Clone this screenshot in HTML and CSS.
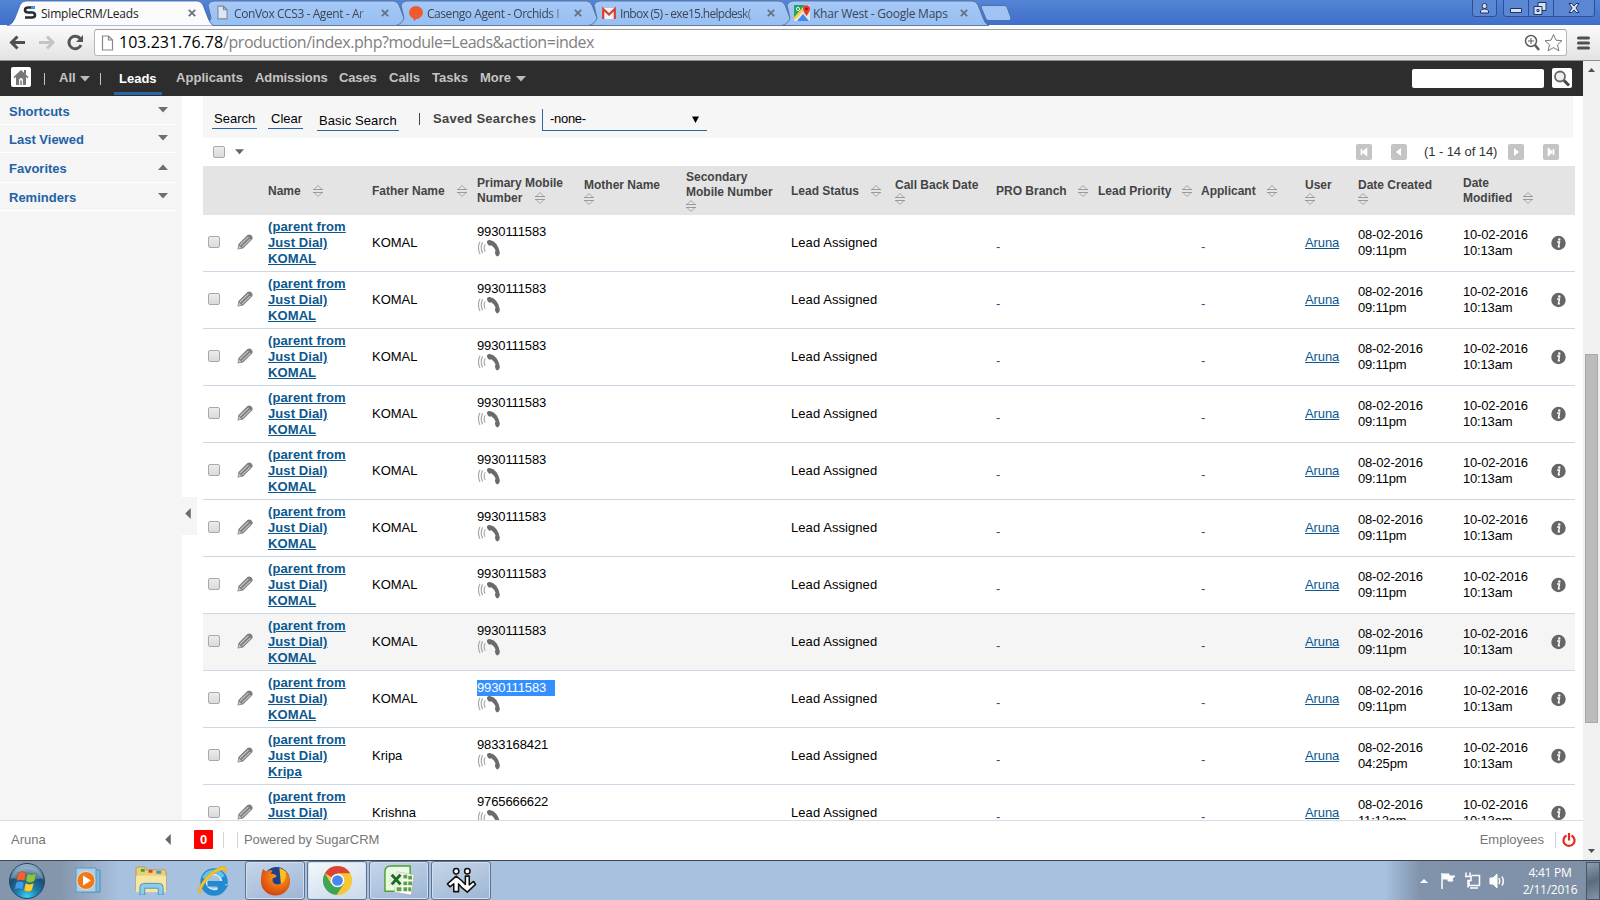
FILE: index.html
```html
<!DOCTYPE html>
<html lang="en">
<head>
<meta charset="utf-8">
<title>SimpleCRM/Leads</title>
<link rel="stylesheet" href="styles.css">
</head>
<body>
<svg class="defs" width="0" height="0">
  <defs>
    <linearGradient id="gTab" x1="0" y1="0" x2="0" y2="1"><stop offset="0" stop-color="#a5c9f7"/><stop offset="1" stop-color="#98bff2"/></linearGradient>
    <radialGradient id="gStart" cx=".5" cy=".95" r=".9"><stop offset="0" stop-color="#3fd0f5"/><stop offset=".35" stop-color="#1a7fae"/><stop offset=".7" stop-color="#1d4d75"/><stop offset="1" stop-color="#8fb2cc"/></radialGradient>
    <linearGradient id="gIe" x1="0" y1="0" x2="0" y2="1"><stop offset="0" stop-color="#6fd0f7"/><stop offset="1" stop-color="#1583d0"/></linearGradient>
    <radialGradient id="gFox" cx=".6" cy=".3" r=".8"><stop offset="0" stop-color="#f9b01c"/><stop offset=".5" stop-color="#ea6a13"/><stop offset="1" stop-color="#c93a0d"/></radialGradient>
  </defs>
  <symbol id="sort" viewBox="0 0 10 12"><path d="M1 4.500 5 .6 9 4.500M1 7.500 5 11.400 9 7.500" fill="#e8e8e8" stroke="#a4a4a4"/><path d="M0 4.500h10M0 7.500h10" stroke="#999"/></symbol>
  <symbol id="pencil" viewBox="0 0 16 16"><path d="M.5 15.500 1.500 10 10.500 1Q12.500-.3 14.300 1.300L15 2.200Q16.300 4 15 5.600L6 14.500Z" fill="#7c7c7c"/><path d="M3 11 11.500 2.800M5.200 12.800 13.500 4.800" stroke="#c8c8c8" stroke-width="1.100"/><path d="M1.200 14.800 2 11.500 4.700 14Z" fill="#c9c9c9"/></symbol>
  <symbol id="phone" viewBox="0 0 24 18"><path d="M9.800 1.500Q10.500 0 13 0 17.500.8 20 4.500 22.800 8.500 23.500 13.500 23.500 16 21 17.500 20 17.500 19 16L18.200 13 19 11.500Q17.500 7.500 14.500 5.500L13 6Q10 5 9.800 1.500Z" fill="#6b6b6b"/><path d="M8.200 4.500Q5.500 8 8 12.500M5.300 2.500Q2.200 8 5.300 14M2.500 1.800Q-.8 8 2.500 14.800" fill="none" stroke="#a5a5a5" stroke-width="1.200"/></symbol>
  <symbol id="info" viewBox="0 0 16 16"><circle cx="8" cy="8" r="7.700" fill="#666"/><circle cx="8.800" cy="4.200" r="1.300" fill="#fff"/><path d="M6.500 7H9L8 12H9.500" fill="none" stroke="#fff" stroke-width="1.600"/></symbol>
  <symbol id="x" viewBox="0 0 8 8"><path d="M.8.800 7.200 7.200M7.200.800.800 7.200" stroke="#667183" stroke-width="1.800"/></symbol>
  <symbol id="page" viewBox="0 0 12 16"><path d="M1 1h6l4 4v10H1zM7 1v4h4" fill="#fff" fill-opacity=".6" stroke="#888" stroke-width="1.200"/></symbol>
  <symbol id="down" viewBox="0 0 10 6"><path d="M0 0h10L5 5.500z" fill="currentColor"/></symbol>
</svg>

<header class="tabstrip">
  <div class="tab active"><svg class="tabbg" viewBox="0 0 207 26"><path d="M0 26Q6 24 8 18L13 5Q15 1 19 1H190Q194 1 196 5L201 18Q203 24 207 26Z" fill="#fbfbfb" stroke="#3b64ad" stroke-width=".8"/></svg>
    <svg class="fav" viewBox="0 0 14 16"><path d="M12 2.500H5.500Q2 2.500 2 5T5.500 7.500H9Q12 7.500 12 10T9 12.500H2" fill="none" stroke="#222b36" stroke-width="2.600"/><path d="M8 1.200h4v2.600H8z" fill="#3d9be9"/></svg>
    <span class="t t1">SimpleCRM/Leads</span><svg class="close"><use href="#x"/></svg></div>
  <div class="tab"><svg class="tabbg" viewBox="0 0 207 26"><path d="M0 25.500Q6 24 8 18L5 5Q7 1 11 1H190Q194 1 196 5L201 18Q203 24 207 25.500Z" fill="url(#gTab)" stroke="#52719f" stroke-width=".9"/></svg>
    <svg class="fav" viewBox="-1 0 14 16"><use href="#page" width="11" height="15"/></svg>
    <span class="t t2 fade">ConVox CCS3 - Agent - Ar</span><svg class="close"><use href="#x"/></svg></div>
  <div class="tab"><svg class="tabbg" viewBox="0 0 207 26"><path d="M0 25.500Q6 24 8 18L5 5Q7 1 11 1H190Q194 1 196 5L201 18Q203 24 207 25.500Z" fill="url(#gTab)" stroke="#52719f" stroke-width=".9"/></svg>
    <svg class="fav" viewBox="0 0 14 16"><ellipse cx="7" cy="7.500" rx="7" ry="6.500" fill="#ee5a30"/><path d="M4 12 5 16 10 12z" fill="#ee5a30"/></svg>
    <span class="t t3 fade">Casengo Agent - Orchids I</span><svg class="close"><use href="#x"/></svg></div>
  <div class="tab"><svg class="tabbg" viewBox="0 0 207 26"><path d="M0 25.500Q6 24 8 18L5 5Q7 1 11 1H190Q194 1 196 5L201 18Q203 24 207 25.500Z" fill="url(#gTab)" stroke="#52719f" stroke-width=".9"/></svg>
    <svg class="fav" viewBox="0 0 14 16"><path d="M0 3h14v11H0z" fill="#f3f3f3"/><path d="M1.200 14V4L7 9.500 12.800 4V14" fill="none" stroke="#d93b30" stroke-width="2.200"/></svg>
    <span class="t t4 fade">Inbox (5) - exe15.helpdesk(</span><svg class="close"><use href="#x"/></svg></div>
  <div class="tab"><svg class="tabbg" viewBox="0 0 207 26"><path d="M0 25.500Q6 24 8 18L5 5Q7 1 11 1H190Q194 1 196 5L201 18Q203 24 207 25.500Z" fill="url(#gTab)" stroke="#52719f" stroke-width=".9"/></svg>
    <svg class="fav maps" viewBox="0 0 16 16"><path d="M0 0h16v16H0z" fill="#e9e5dc"/><path d="M0 0h11L0 13z" fill="#1fa463"/><path d="M3 16 9 9 15 16z" fill="#4285f4"/><path d="M0 14 10 3" stroke="#fc3" stroke-width="2.500"/><path d="M12.500 11Q9 6 9 3.800A3.500 3.500 0 0 1 16 3.800Q16 6 12.500 11z" fill="#e33b2e"/><circle cx="12.500" cy="4" r="1.300" fill="#7a1a12"/><circle cx="4" cy="4" r="1.600" fill="none" stroke="#fff" stroke-width=".9"/></svg>
    <span class="t t5">Khar West - Google Maps</span><svg class="close"><use href="#x"/></svg></div>
  <svg class="newtab" viewBox="0 0 32 16"><path d="M1 2Q1 .5 3 .5H24Q26 .5 27 2L31 13Q31 15.500 29 15.500H9Q7 15.500 6 14Z" fill="#9fc4f4" stroke="#4b6fae"/></svg>
  <svg class="winbtns" width="126" height="20" viewBox="0 0 126 20"><g fill="#5a86d4" stroke="#2e4f93"><path d="M1.500-2V14Q1.500 16.500 4 16.500H23Q25.500 16.500 25.500 14V-2z"/><path d="M32.500-2V14Q32.500 16.500 35 16.500H121Q123.500 16.500 123.500 14V-2z"/><path d="M57.500 0V16M82.500 0V16"/></g><g fill="#d4e2f7" stroke="#22355f"><circle cx="13.500" cy="6" r="2.500"/><path d="M9.500 13V11Q10 9 13.500 9T17.500 11V13z"/><path d="M39.500 8.500h11v4h-11z"/><path d="M67 2.500h8v8h-8z"/><path d="M63 6.500h8v8h-8zM66 9.500h2v2h-2z"/><path d="M98 3.500h3l2 2.500 2-2.500h3L105 8l3 4.500h-3L103 10l-2 2.500h-3l3-4.500z"/></g></svg>
</header>

<div class="toolbar">
  <svg class="navicons" width="94" height="36" viewBox="0 0 94 36"><g fill="none" stroke-width="3"><path d="M25 17.500H12M17.500 11.500l-6 6 6 6" stroke="#4f4f4f"/><path d="M39 17.500H52M47 11.500l6 6-6 6" stroke="#c4c4c4"/><path d="M80.500 14A6.300 6.300 0 1 0 81 20" stroke="#555"/></g><path d="M83 10v7h-7z" fill="#555"/></svg>
  <div class="omnibox"><svg class="pg"><use href="#page"/></svg><span class="url"><b>103.231.76.78</b>/production/index.php?module=Leads&amp;action=index</span>
    <svg class="omniicons" width="42" height="22" viewBox="0 0 42 22"><g fill="none" stroke="#5c5c5c"><circle cx="8" cy="9" r="5.500" stroke-width="1.500"/><path d="M5 9h6M8 6v6"/><path d="M12 13l4 5" stroke-width="2.500"/><path d="M30.500 2.500l2.500 5.700 6 .5-4.500 4.100 1.400 6-5.400-3.200-5.400 3.200 1.400-6-4.500-4.100 6-.5z" stroke="#777"/></g></svg></div>
  <svg class="burger" width="13" height="14" viewBox="0 0 13 14"><path d="M1.500 2h10M1.500 7h10M1.500 12h10" stroke="#505050" stroke-width="3" stroke-linecap="round"/></svg>
</div>

<div class="view">
  <div class="page">
    <nav class="nav">
      <svg class="home" viewBox="0 0 20 20"><rect width="20" height="20" rx="2" fill="#fff"/><path d="M2.500 10 10 3l7.500 7-1 1.200L15 10v8H5v-8l-1.500 1.200zM13 3h2v4h-2z" fill="#777"/><path d="M8 18v-5a2 2 0 0 1 4 0v5z" fill="#eee"/><path d="M9.300 18v-4.500h1.400V18z" fill="#777"/></svg>
      <span class="bar b1"></span><span class="n n-all">All</span><svg class="caret"><use href="#down"/></svg><span class="bar b2"></span>
      <span class="n on n-leads">Leads</span><span class="n n-app">Applicants</span><span class="n n-adm">Admissions</span><span class="n n-cas">Cases</span><span class="n n-cal">Calls</span><span class="n n-tas">Tasks</span><span class="n n-mor">More</span><svg class="caret"><use href="#down"/></svg>
      <span class="query"></span>
      <svg class="go" viewBox="0 0 20 20"><rect width="20" height="20" rx="2" fill="#fff"/><circle cx="8" cy="8.500" r="5" fill="#eee" stroke="#666" stroke-width="1.800"/><path d="M12 12.500l5 5" stroke="#444" stroke-width="3"/></svg>
    </nav>
    <div class="body">
      <aside class="side">
        <div class="s h28"><span>Shortcuts</span><svg><use href="#down"/></svg></div>
        <div class="s h28"><span>Last Viewed</span><svg><use href="#down"/></svg></div>
        <div class="s h30"><span>Favorites</span><svg class="up"><use href="#down"/></svg></div>
        <div class="s h28"><span>Reminders</span><svg><use href="#down"/></svg></div>
        <div class="handle"><svg viewBox="0 0 6 12"><path d="M6 0v12L0 6z" fill="#6a6a6a"/></svg></div>
      </aside>
      <main class="main">
        <div class="search"><span class="lk l1">Search</span><span class="lk l2">Clear</span><span class="lk l3">Basic Search</span><span class="vb"></span><span class="ss">Saved Searches</span><span class="sel"><span>-none-</span><svg viewBox="0 0 7 7"><path d="M0 .5h7L3.500 7z" fill="#000"/></svg></span></div>
        <div class="pager"><i class="cb"></i><svg class="dd"><use href="#down"/></svg>
          <div class="pg-nav"><svg viewBox="0 0 16 16"><rect width="16" height="16" rx="2" fill="#c4c4c4"/><path d="M5.500 5v6M10.500 5v6L7 8z" fill="#fff" stroke="#fff" stroke-width="1.600"/></svg><svg viewBox="0 0 16 16"><rect width="16" height="16" rx="2" fill="#c4c4c4"/><path d="M10 4v8L5 8z" fill="#fff"/></svg><span class="count">(1 - 14 of 14)</span><svg viewBox="0 0 16 16"><rect width="16" height="16" rx="2" fill="#c4c4c4"/><path d="M6 4v8l5-4z" fill="#fff"/></svg><svg viewBox="0 0 16 16"><rect width="16" height="16" rx="2" fill="#c4c4c4"/><path d="M10.500 5v6M5.500 5v6L9 8z" fill="#fff" stroke="#fff" stroke-width="1.600"/></svg></div>
        </div>
        <div class="grid head" id="head"></div>
        <div id="rows"></div>
      </main>
    </div>
    <footer class="foot"><span class="fu">Aruna</span><svg class="fl" viewBox="0 0 6 12"><path d="M6 0v12L0 6z" fill="#666"/></svg><span class="zero">0</span><i class="fb f1"></i><i class="fb f2"></i><span class="pw">Powered by SugarCRM</span><span class="emp">Employees</span><i class="fb f3"></i><svg class="power" viewBox="0 0 14 14"><path d="M4.500 2.500A5.500 5.500 0 1 0 9.500 2.500M7 0v7.500" fill="none" stroke="#e8281c" stroke-width="2.200"/></svg></footer>
  </div>
  <div class="scroll"><svg viewBox="0 0 7 4"><path d="M0 4h7L3.500 0z" fill="#505050"/></svg><div class="thumb"></div><svg viewBox="0 0 7 4"><path d="M0 0h7L3.500 4z" fill="#505050"/></svg></div>
</div>

<div class="taskbar">
  <svg class="start" viewBox="0 0 38 38"><circle cx="19" cy="19" r="17.500" fill="url(#gStart)" stroke="#26425c"/><path d="M3 16A17 17 0 0 1 35 16Q19 20 3 16z" fill="#fff" opacity=".25"/><g stroke="#345" stroke-width=".3"><path d="M10 11q4-3 8 0l-1.500 8q-4-2-8 0z" fill="#f0642c"/><path d="M19.500 11.500q4 2.500 9-.5l-2 8q-4 3-8.500.5z" fill="#8cc63e"/><path d="M8 20.500q4-2.500 8 0l-1.500 7q-4-2-8 .5z" fill="#3f9df0"/><path d="M17.500 21q4 2.500 8.500 0l-2 7.500q-4 2.500-8 0z" fill="#fbd02c"/></g></svg>
  <svg class="q wmp" viewBox="0 0 28 28"><path d="M7 3h18v22H7z" fill="#7fb8df" stroke="#4c8dbc"/><path d="M1 1h20v24H1z" fill="#a7d0ec" stroke="#5b9ac6"/><circle cx="11" cy="13.500" r="9" fill="#f0781c" stroke="#fbd9b2"/><path d="M8 8.500v10l8-5z" fill="#fff"/></svg>
  <svg class="q exp" viewBox="0 0 34 30"><path d="M1 3Q1 1 3 1H10L12 4H30Q32 4 32 6V25H1z" fill="#e8cf79" stroke="#b99c48"/><path d="M6 3h4v3H6z" fill="#3aa046"/><path d="M14 4h4v3h-4z" fill="#d8442c"/><path d="M22 5h5v3h-5z" fill="#3c93d4"/><path d="M1 10H32V27H1z" fill="#f6e6a0"/><path d="M5 30V22Q5 18 9 18H25Q29 18 29 22V30H24V23H10V30z" fill="#8dcbec" stroke="#4a94c0"/></svg>
  <svg class="q ie" viewBox="0 0 32 32"><circle cx="17" cy="17" r="10" fill="none" stroke="#d8effc" stroke-width="6.500"/><path d="M28 18.800H10.500M28 19.500V16A11 11 0 1 0 26.300 23H20.500" fill="none" stroke="#2389d0" stroke-width="5.500"/><path d="M26 12A10.500 10.500 0 0 0 7 13.500" fill="none" stroke="#62c3f2" stroke-width="4"/><path d="M4 28Q-1 31 4 19 12 6 24 2 31 0 28.500 8 28 3.500 22 6 12 10 6 21 2.500 27 4 28z" fill="#f7c51e" stroke="#dfa20f" stroke-width=".6"/></svg>
  <div class="app a1"><svg viewBox="0 0 32 32"><circle cx="17" cy="15.500" r="13.500" fill="#223f8e"/><path d="M20 3A14 14 0 0 1 28 8L27 18 22 24z" fill="#f8c21b"/><path d="M3 4L7 7Q10 4 13 6L11 9Q17 9 17 12L13 14Q12 20 18 20T26 14 25 5Q31 10 31 17A15 14.500 0 0 1 1 17Q1 9 3 4z" fill="url(#gFox)"/></svg></div>
  <div class="app a2"><svg viewBox="0 0 32 32"><circle cx="16" cy="16" r="15" fill="#f5c733"/><path d="M16 16 3 8.500A15 15 0 0 1 29 8.500H16z" fill="#d8443a"/><path d="M3 8.500A15 15 0 0 0 15 31L22.500 19.500 9.500 19.500z" fill="#3ea457"/><circle cx="16" cy="16" r="7" fill="#fff"/><circle cx="16" cy="16" r="5.500" fill="#4688f1"/></svg></div>
  <div class="app a3"><svg viewBox="0 0 32 32"><path d="M1 27V7Q1 1 7 1H27V27z" fill="#eef8e4" stroke="#4ba32d" stroke-width="1.500"/><path d="M13 7 31 10 28 31 11 28z" fill="#fff" stroke="#aaa" stroke-width=".6"/><path d="M20 10h4v4h-4zM25 11h4v4h-4zM20 17h4v4h-4zM25 17h4v4h-4zM13 23h5v4h-5zM20 23h4v4h-4zM25 23h3v4h-3z" fill="#5ba342"/><path d="M5 8h14v14H5z" fill="#e1f2d6"/><path d="M8 10l9 10M17 10 8 20" stroke="#1d6a28" stroke-width="3"/></svg></div>
  <div class="app a4"><svg viewBox="0 0 32 28"><g fill="#fff" stroke="#111" stroke-width="1.600" stroke-linejoin="round"><circle cx="10.500" cy="4.500" r="2.800"/><circle cx="22" cy="4.500" r="2.800"/><path d="M8 25.500V17.500L4 20.500 1.500 17.500 10.500 9.500 16 14 20 18V9.500H24V18.500L28.500 15 30.500 18 22 26 16 21 13 17.500V25.500z"/></g></svg></div>
  <svg class="tray" width="90" height="24" viewBox="0 0 90 24"><path d="M1 14l4-4 4 4z" fill="#fff"/><g stroke="#fff" fill="none" stroke-width="1.500"><path d="M23 4v16"/><path d="M24 5h6v2h6l-3 3 1 2h-5v-2h-5z" fill="#fff" stroke-width="1"/><path d="M52.500 6.500h8v10H50v-5M51 19h8M47 3.500v4M51 3.500v4M46 7.500h6v4h-3v7"/><path d="M71 9h3l4-4v14l-4-4h-3z" fill="#fff" stroke-width="1"/><path d="M80 9q1.500 3 0 6M83 7.500q2.500 4.500 0 9"/></g></svg>
  <div class="clock"><span class="c1">4:41 PM</span><span class="c2">2/11/2016</span></div>
  <div class="desk"></div>
</div>
<script src="app.js"></script>
</body>
</html>
```
FILE: styles.css
```css
* { box-sizing: border-box; }
body { margin: 0; width: 1600px; height: 900px; overflow: hidden; font-family: "Liberation Sans", Arial, sans-serif; font-size: 13px; color: #000; background: #fff; display: flex; flex-direction: column; }
svg { display: block; flex: none; }
svg.defs { position: absolute; }
span, i { flex: none; white-space: nowrap; font-style: normal; }

.tabstrip { height: 25px; background: linear-gradient(#5384d5, #3f6fc9); display: flex; padding-left: 10px; }
.tab { position: relative; width: 193px; height: 25px; flex: none; display: flex; align-items: center; padding: 1px 0 0 13px; font-family: "Open Sans", "Noto Sans", sans-serif; font-size: 12px; color: #3b4656; z-index: 1; }
.tab.active { z-index: 2; color: #222; }
.tabbg { position: absolute; left: -3px; top: 0; width: 207px; height: 26px; z-index: -1; }
.tab:not(.active) .tabbg { left: 0; }
.fav { width: 14px; height: 16px; margin-right: 4px; }
.fav.maps { width: 16px; margin: 0 3px 0 -1px; }
.tab .t { width: 138px; }
.t1 { letter-spacing: -.22px; }
.t2 { letter-spacing: -.42px; }
.t3 { letter-spacing: -.45px; }
.t4 { letter-spacing: -.7px; }
.t5 { letter-spacing: -.25px; }
.fade { -webkit-mask-image: linear-gradient(90deg, #000 88%, rgba(0,0,0,.3)); }
.close { width: 8px; height: 8px; margin-left: 9px; }
.newtab { width: 32px; height: 16px; margin: 5px 0 0 5px; }
.winbtns { margin-left: auto; margin-right: 3px; }

.toolbar { height: 36px; background: linear-gradient(#fbfbfb, #e3e3e3); border-bottom: 1px solid #8f8f8f; display: flex; align-items: center; }
.omnibox { width: 1473px; height: 27px; background: #fff; border: 1px solid #b8b8b8; border-top-color: #a0a0a0; border-radius: 3px; display: flex; align-items: center; padding-left: 6px; }
.pg { width: 13px; height: 16px; margin-right: 5px; }
.url { font-family: "Open Sans", "Noto Sans", sans-serif; font-size: 16px; letter-spacing: -.47px; color: #808080; line-height: 24px; padding-bottom: 1px; }
.url b { font-weight: 400; color: #000; letter-spacing: 0; }
.omniicons { margin-left: auto; margin-right: 1px; }
.burger { margin-left: 10px; }

.view { height: 799px; display: flex; }
.page { width: 1583px; height: 799px; display: flex; flex-direction: column; }
.scroll { width: 17px; background: #f0f0f0; display: flex; flex-direction: column; align-items: center; padding: 7px 0 7px; }
.scroll svg { width: 7px; height: 4px; }
.thumb { width: 13px; height: 369px; margin: 282px 0 auto; background: #bcbcbc; border: 1px solid #a8a8a8; }

.nav { height: 35px; background: #2d2d2d; display: flex; align-items: center; padding-left: 11px; color: #c4c4c4; font-weight: 700; }
.home { width: 20px; height: 20px; margin-top: -3px; }
.bar { width: 1px; height: 12px; background: #c4c4c4; }
.b1 { margin: 0 14px 0 13px; }
.b2 { margin: 0 13px 0 10px; }
.n { height: 35px; line-height: 34px; }
.caret { width: 10px; height: 6px; color: #bbb; margin: 0 0 0 5px; }
.n.on { color: #fff; height: 33px; border-bottom: 3px solid #2a66a5; padding: 0 5px; width: 48px; margin-right: 14px; }
.n-leads { line-height: 34px; }
.n-all { width: 16px; }
.n-app { width: 79px; letter-spacing: .05px; } .n-adm { width: 84px; letter-spacing: -.1px; } .n-cas { width: 50px; letter-spacing: -.15px; } .n-cal { width: 43px; } .n-tas { width: 48px; letter-spacing: .05px; } .n-mor { width: 31px; }
.query { width: 132px; height: 19px; background: #fff; border-radius: 2px; margin: 0 8px 0 auto; }
.go { width: 20px; height: 20px; margin: -2px 11px 0 0; }

.body { height: 724px; display: flex; overflow: hidden; }
.side { width: 182px; height: 724px; background: #f5f5f5; position: relative; }
.s { width: 176px; border-bottom: 1px solid #fff; display: flex; align-items: center; justify-content: space-between; padding: 1px 8px 0 9px; color: #2262a5; font-weight: 700; }
.s span { padding-top: 1px; }
.s svg { width: 10px; height: 6px; color: #6f6f6f; margin-top: -2px; }
.s svg.up { transform: rotate(180deg); }
.h28 { height: 28px; } .h30 { height: 30px; } .s:first-child { height: 29px; }
.handle { position: absolute; left: 182px; top: 401px; width: 15px; height: 38px; background: #f5f5f5; display: flex; align-items: center; padding: 0 0 5px 3px; }
.handle svg { width: 6px; height: 11px; }

.main { width: 1372px; margin-left: 21px; height: 724px; overflow: hidden; }
.search { width: 1370px; height: 42px; background: #f6f6f6; display: flex; padding-left: 9px; }
.lk { height: 22px; margin-top: 11px; line-height: 23px; border-bottom: 1px solid #2a66a5; padding-left: 2px; }
.l1 { width: 45px; margin-right: 11px; } .l2 { width: 35px; padding-left: 3px; margin-right: 14px; } .l3 { width: 82px; margin-top: 13px; margin-right: 20px; letter-spacing: .1px; }
.vb { width: 1px; height: 12px; background: #444; margin: 17px 13px 0 0; }
.ss { font-weight: 700; color: #444; width: 109px; margin-top: 15px; letter-spacing: .25px; }
.sel { width: 165px; height: 22px; margin-top: 13px; border-left: 1px solid #2a66a5; border-bottom: 1px solid #2a66a5; display: flex; align-items: center; padding: 0 8px 2px 7px; justify-content: space-between; }
.sel > span { letter-spacing: -.3px; }
.sel svg { width: 7px; height: 7px; margin-top: 1px; }
.pager { height: 28px; display: flex; align-items: center; padding: 0 0 1px 10px; }
.cb { width: 12px; height: 12px; border: 1px solid #a9a9a9; border-radius: 2px; background: linear-gradient(#ececec, #dadada); }
.dd { width: 9px; height: 6px; margin: 1px 0 0 10px; color: #666; }
.pg-nav { display: flex; align-items: center; margin-left: auto; padding-right: 16px; color: #333; }
.pg-nav svg { width: 16px; height: 16px; margin-top: 1px; }
.pg-nav svg + svg { margin-left: 19px; }
.count { width: 84px; margin-left: 17px; letter-spacing: -.08px; }

.grid { display: grid; grid-template-columns: 34px 31px 104px 105px 107px 102px 105px 104px 101px 102px 103px 104px 53px 105px 85px 27px; width: 1372px; }
.head { height: 49px; background: #e4e4e4; color: #444; font-weight: 700; font-size: 12px; line-height: 15px; }
.head .c { align-self: center; padding-top: 1px; white-space: nowrap; }
.head svg { width: 10px; height: 12px; }
.head .side-s { display: inline-block; vertical-align: -2px; }
.row { height: 57px; border-bottom: 1px solid #cbd7e2; line-height: 16px; }
.row .c { align-self: center; padding-bottom: 1px; }
.row.hot { background: #f5f5f5; }
.row .c0 { padding: 0 0 3px 5px; }
.row .edit { padding-bottom: 3px; }
.row .name { color: #0b578f; font-weight: 700; text-decoration: underline; padding: 0; letter-spacing: .1px; }
.row .num { padding-bottom: 5px; letter-spacing: -.12px; }
.row .st { letter-spacing: .07px; }
.row .dt { letter-spacing: -.17px; }
.num svg { width: 24px; height: 17px; }
.pick { background: #3390ff; color: #fff; display: block; width: 78px; height: 16px; }
.row .lnk { color: #0b578f; text-decoration: underline; letter-spacing: -.1px; }
.row .dash { color: #0b578f; padding: 7px 0 0; line-height: 16px; }
.pen { width: 16px; height: 16px; }
.inf { width: 15px; height: 16px; margin-left: 3px; }

.foot { height: 40px; border-top: 1px solid #dcdcdc; display: flex; align-items: center; padding: 0 0 2px 11px; color: #777; background: #fff; }
.foot .fu { width: 154px; }
.fl { width: 6px; height: 11px; margin-right: 23px; }
.zero { width: 19px; height: 19px; background: #f00; color: #fff; font-weight: 700; text-align: center; line-height: 19px; border-radius: 1px; }
.fb { width: 1px; height: 16px; background: #d5d5d5; }
.f1 { margin-left: 10px; } .f2 { margin: 0 6px 0 13px; }
.pw { letter-spacing: -.07px; }
.emp { margin-left: auto; } .f3 { margin: 0 6px 0 11px; }
.power { width: 14px; height: 14px; margin-right: 7px; }

.taskbar { height: 40px; border-top: 1px solid #3c4653; background: linear-gradient(90deg, #8496ac 0, #8496ac 60px, #a8c1de 120px, #a8c1de 1385px, #8093ab 1420px, #7f90a6 100%); display: flex; align-items: center; }
.start { width: 38px; height: 38px; margin-left: 8px; }
.q.wmp { width: 28px; height: 28px; margin-left: 29px; }
.q.exp { width: 33px; height: 29px; margin-left: 32px; }
.q.ie { width: 32px; height: 32px; margin-left: 29px; }
.app { width: 60px; height: 39px; border: 1px solid #5f7391; border-radius: 3px; box-shadow: inset 0 0 0 1px #cfdff0; background: linear-gradient(160deg, #c6d6ea, #9db5d3); display: flex; align-items: center; justify-content: center; margin-right: 2px; }
.app svg { width: 31px; height: 31px; }
.a1 { margin-left: 16px; }
.a2 { background: linear-gradient(160deg, #f3f8fd, #c9d8ea); }
.tray { margin-left: auto; margin-right: 14px; }
.clock { width: 54px; display: flex; flex-direction: column; align-items: center; font-family: "Open Sans", "Noto Sans", sans-serif; font-size: 12px; letter-spacing: -.25px; line-height: 17px; color: #fff; }
.desk { width: 14px; height: 38px; margin-left: 9px; background: linear-gradient(160deg, #8d9bad, #5b6b80 50%, #8593a6); border: 1px solid #48566b; }
```
FILE: app.js
```js
const sort = (cls, gap) => `<svg class="${cls}" style="margin-left:${gap}px"><use href="#sort"/></svg>`;
const heads = [
  ['Name', 12, 0], ['Father Name', 12, 0], ['Primary Mobile<br>Number', 13, 0], ['Mother Name', 0, 1],
  ['Secondary<br>Mobile Number', 0, 1], ['Lead Status', 12, 0], ['Call Back Date', 0, 1], ['PRO Branch', 11, 0],
  ['Lead Priority', 11, 0], ['Applicant', 11, 0], ['User', 0, 1], ['Date Created', 0, 1], ['Date<br>Modified', 11, 0]
];
document.getElementById('head').innerHTML = '<span></span><span></span>' +
  heads.map(([t, gap, below], i) => `<div class="c h${i}">${t}${below ? sort('under', 0) : sort('side-s', gap)}</div>`).join('');

const rows = Array.from({ length: 9 }, () => ['KOMAL', '9930111583', '09:11pm']);
rows.push(['Kripa', '9833168421', '04:25pm'], ['Krishna', '9765666622', '11:12am']);
document.getElementById('rows').innerHTML = rows.map(([n, num, t], i) => `<div class="grid row${i === 7 ? ' hot' : ''}">
  <div class="c c0"><i class="cb" style="display:block"></i></div>
  <div class="c edit"><svg class="pen"><use href="#pencil"/></svg></div>
  <div class="c name">(parent from<br>Just Dial)<br>${n}</div>
  <div class="c">${n}</div>
  <div class="c num">${i === 8 ? `<span class="pick">${num}</span>` : num}<svg><use href="#phone"/></svg></div>
  <div></div><div></div>
  <div class="c st">Lead Assigned</div><div></div>
  <div class="c dash">-</div><div></div><div class="c dash">-</div>
  <div class="c lnk">Aruna</div>
  <div class="c dt">08-02-2016<br>${t}</div>
  <div class="c dt">10-02-2016<br>10:13am</div>
  <div class="c"><svg class="inf"><use href="#info"/></svg></div>
</div>`).join('');
```
